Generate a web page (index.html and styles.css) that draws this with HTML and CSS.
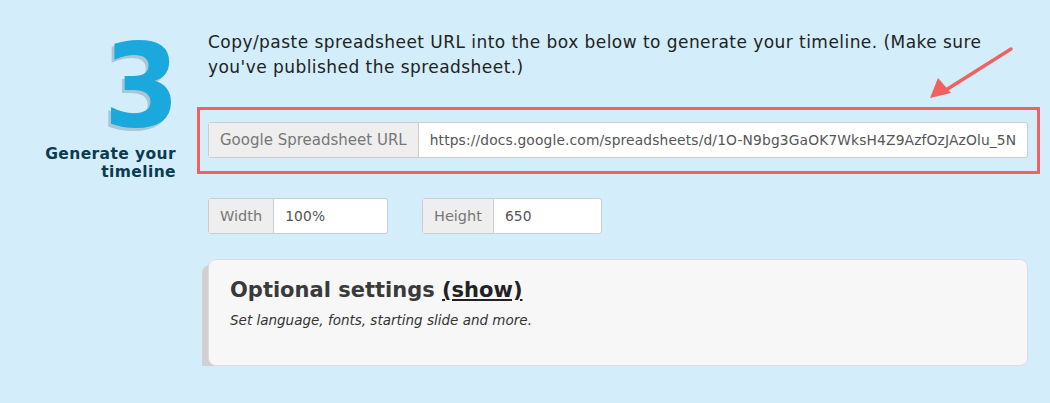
FILE: index.html
```html
<!DOCTYPE html>
<html lang="en">
<head>
    <meta charset="UTF-8">
    <title>Generate your timeline</title>
    <link rel="stylesheet" href="styles.css">
</head>
<body>
    <div class="step">
        <div class="step-side">
            <div class="step-num"><span>3</span></div>
            <h3 class="step-title">Generate your timeline</h3>
        </div>
        <div class="step-main">
            <p class="intro">Copy/paste spreadsheet URL into the box below to generate your timeline. (Make sure you've published the spreadsheet.)</p>

            <div class="highlight">
                <div class="input-group">
                    <span class="addon">Google Spreadsheet URL</span>
                    <input type="text" class="field" value="https://docs.google.com/spreadsheets/d/1O-N9bg3GaOK7WksH4Z9AzfOzJAzOlu_5NxjfY9RQ2Hs/pubhtml">
                </div>
            </div>

            <div class="size-row">
                <div class="input-group small">
                    <span class="addon">Width</span>
                    <input type="text" class="field" value="100%">
                </div>
                <div class="input-group small">
                    <span class="addon">Height</span>
                    <input type="text" class="field" value="650">
                </div>
            </div>

            <div class="panel">
                <h2>Optional settings <a href="#">(show)</a></h2>
                <p>Set language, fonts, starting slide and more.</p>
            </div>
        </div>
    </div>

    <!-- annotation arrow pointing at the url box -->
    <svg class="arrow" width="100" height="70" viewBox="0 0 100 70">
        <line x1="85" y1="7" x2="20" y2="48" stroke="#f26161" stroke-width="3.5" stroke-linecap="round"/>
        <polygon points="4,56 12,36 25,51" fill="#f26161"/>
    </svg>
</body>
</html>
```

FILE: styles.css
```css
body {
    margin: 0;
    background-color: #d3eefa;
    font-family: "DejaVu Sans", sans-serif;
    color: #333;
}
.step {
    display: flex;
    gap: 32px;
    padding-top: 30px;
}
.step-side {
    width: 176px;
    flex-shrink: 0;
    text-align: right;
}
.step-num {
    font-size: 116px;
    font-weight: bold;
    line-height: 112px;
    color: #1ba8dd;
    text-shadow: -3px 3px 0 #aac6d3;
    margin-right: -4px;
}
.step-num span {
    display: inline-block;
    transform: scaleX(0.94);
    transform-origin: right center;
}
.step-title {
    margin: 3px 0 0;
    font-size: 15.5px;
    line-height: 18px;
    font-weight: bold;
    letter-spacing: 0.4px;
    color: #0b3b4f;
}
.step-main {
    width: 820px;
}
.intro {
    margin: 0;
    font-size: 17px;
    line-height: 25px;
    letter-spacing: 0.45px;
    color: #222;
}
.highlight {
    margin: 27px -12px 0 -11px;
    border: 3px solid #f26161;
    padding: 12px 9px 13px 8px;
}
.input-group {
    display: flex;
    height: 36px;
    border: 1px solid #ccc;
    border-radius: 3px;
    background: #fff;
    box-sizing: border-box;
}
.addon {
    display: flex;
    align-items: center;
    padding: 0 11px;
    background: #eee;
    border-right: 1px solid #ccc;
    color: #777;
    font-size: 15px;
}
.field {
    flex: 1;
    min-width: 0;
    border: none;
    background: transparent;
    padding: 0 11px;
    font-family: "DejaVu Sans", sans-serif;
    font-size: 13.8px;
    letter-spacing: 0.15px;
    color: #555;
}
.size-row {
    display: flex;
    gap: 34px;
    margin-top: 24px;
}
.input-group.small {
    width: 180px;
}
.input-group.small .addon {
    font-size: 14.5px;
}
.panel {
    margin-top: 25px;
    height: 107px;
    box-sizing: border-box;
    background: #f7f7f7;
    border: 1px solid #dcdcdc;
    border-radius: 8px;
    box-shadow: -6px 6px 0 #d0d0d0;
    padding: 18px 21px;
}
.panel h2 {
    margin: 0;
    font-size: 21px;
    font-weight: bold;
    color: #3a3a3a;
}
.panel h2 a {
    color: #222;
}
.panel p {
    margin: 10px 0 0;
    font-size: 13.5px;
    font-style: italic;
    color: #333;
}
.arrow {
    position: absolute;
    left: 926px;
    top: 42px;
}
```
